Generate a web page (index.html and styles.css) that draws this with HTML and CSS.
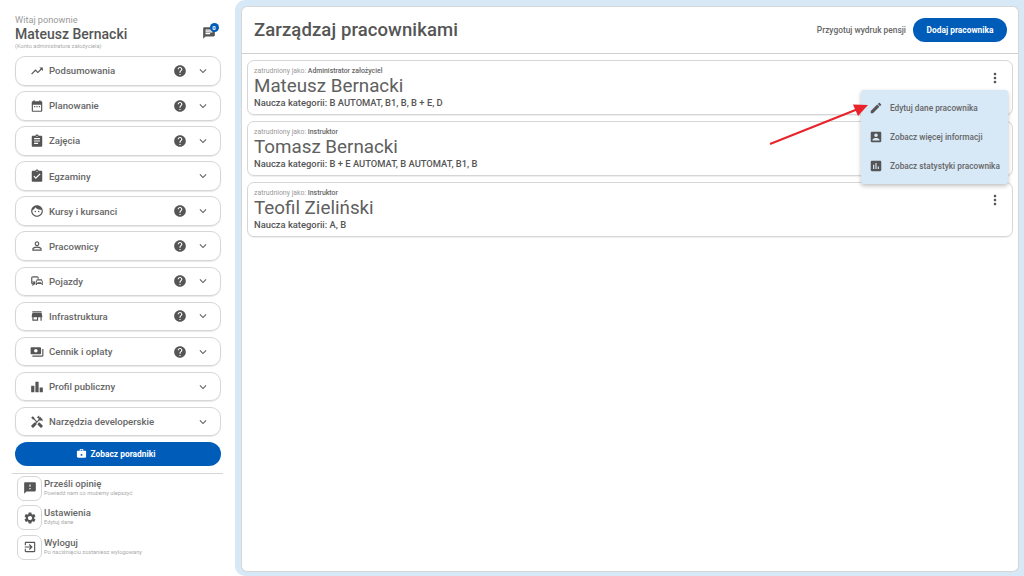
FILE: index.html
```html
<!DOCTYPE html>
<html lang="pl">
<head>
<meta charset="utf-8">
<title>Zarządzaj pracownikami</title>
<link rel="stylesheet" href="styles.css">
</head>
<body>
<div class="app">
  <aside class="sidebar">
    <header class="user">
      <div>
        <div class="hello">Witaj ponownie</div>
        <div class="uname">Mateusz Bernacki</div>
        <div class="role">(Konto administratora założyciela)</div>
      </div>
      <div class="msg">
        <svg class="ic20" viewBox="0 0 24 24"><path d="M20 2H4c-1.1 0-2 .9-2 2v18l4-4h14c1.1 0 2-.9 2-2V4c0-1.100-.9-2-2-2zM6 9h12v2H6zm8 5H6v-2h8zm4-6H6V6h12z"/></svg>
        <span class="badge">0</span>
      </div>
    </header>
    <nav class="menu">
      <div class="item"><svg class="ic" viewBox="0 0 24 24"><path d="M16 6l2.290 2.290-4.880 4.880-4-4L2 16.590 3.410 18l6-6 4 4 6.300-6.290L22 12V6z"/></svg><span class="lbl">Podsumowania</span><svg class="help" viewBox="0 0 24 24"><path d="M12 2C6.480 2 2 6.480 2 12s4.480 10 10 10 10-4.480 10-10S17.520 2 12 2zm1 17h-2v-2h2v2zm2.070-7.750l-.9.920C13.450 12.900 13 13.500 13 15h-2v-.5c0-1.100.45-2.100 1.170-2.830l1.240-1.260c.37-.36.590-.86.590-1.410 0-1.100-.9-2-2-2s-2 .9-2 2H8c0-2.210 1.790-4 4-4s4 1.790 4 4c0 .88-.36 1.680-.93 2.250z"/></svg><svg class="chev" viewBox="0 0 24 24"><path d="M7.410 8.590L12 13.170l4.590-4.580L18 10l-6 6-6-6z"/></svg></div>
      <div class="item"><svg class="ic" viewBox="0 0 24 24"><path d="M19 4h-1V2h-2v2H8V2H6v2H5c-1.100 0-2 .9-2 2v14c0 1.100.9 2 2 2h14c1.100 0 2-.9 2-2V6c0-1.100-.9-2-2-2zm0 16H5V10h14v10zM7 12h2v2H7zm4 0h2v2h-2zm4 0h2v2h-2z"/></svg><span class="lbl">Planowanie</span><svg class="help" viewBox="0 0 24 24"><path d="M12 2C6.480 2 2 6.480 2 12s4.480 10 10 10 10-4.480 10-10S17.520 2 12 2zm1 17h-2v-2h2v2zm2.070-7.750l-.9.920C13.450 12.900 13 13.500 13 15h-2v-.5c0-1.100.45-2.100 1.170-2.830l1.240-1.260c.37-.36.590-.86.590-1.410 0-1.100-.9-2-2-2s-2 .9-2 2H8c0-2.210 1.790-4 4-4s4 1.790 4 4c0 .88-.36 1.680-.93 2.250z"/></svg><svg class="chev" viewBox="0 0 24 24"><path d="M7.410 8.590L12 13.170l4.590-4.580L18 10l-6 6-6-6z"/></svg></div>
      <div class="item"><svg class="ic" viewBox="0 0 24 24"><path d="M19 3h-4.180C14.400 1.840 13.300 1 12 1s-2.400.84-2.820 2H5c-1.100 0-2 .9-2 2v15c0 1.100.9 2 2 2h14c1.100 0 2-.9 2-2V5c0-1.100-.9-2-2-2zm-7 0c.55 0 1 .45 1 1s-.45 1-1 1-1-.45-1-1 .45-1 1-1zm2 14H7v-2h7v2zm3-4H7v-2h10v2zm0-4H7V7h10v2z"/></svg><span class="lbl">Zajęcia</span><svg class="help" viewBox="0 0 24 24"><path d="M12 2C6.480 2 2 6.480 2 12s4.480 10 10 10 10-4.480 10-10S17.520 2 12 2zm1 17h-2v-2h2v2zm2.070-7.750l-.9.920C13.450 12.900 13 13.500 13 15h-2v-.5c0-1.100.45-2.100 1.170-2.830l1.240-1.260c.37-.36.590-.86.590-1.410 0-1.100-.9-2-2-2s-2 .9-2 2H8c0-2.210 1.790-4 4-4s4 1.790 4 4c0 .88-.36 1.680-.93 2.250z"/></svg><svg class="chev" viewBox="0 0 24 24"><path d="M7.410 8.590L12 13.170l4.590-4.580L18 10l-6 6-6-6z"/></svg></div>
      <div class="item"><svg class="ic" viewBox="0 0 24 24"><path d="M19 3h-4.180C14.400 1.840 13.300 1 12 1s-2.400.84-2.820 2H5c-1.100 0-2 .9-2 2v15c0 1.100.9 2 2 2h14c1.100 0 2-.9 2-2V5c0-1.100-.9-2-2-2zm-7 0c.55 0 1 .45 1 1s-.45 1-1 1-1-.45-1-1 .45-1 1-1zm-2 14l-4-4 1.410-1.410L10 14.170l6.590-6.590L18 9l-8 8z"/></svg><span class="lbl">Egzaminy</span><svg class="chev" viewBox="0 0 24 24"><path d="M7.410 8.590L12 13.170l4.590-4.580L18 10l-6 6-6-6z"/></svg></div>
      <div class="item"><svg class="ic" viewBox="0 0 24 24"><circle cx="9" cy="13" r="1.250"/><circle cx="15" cy="13" r="1.250"/><path d="M12 2C6.480 2 2 6.480 2 12s4.480 10 10 10 10-4.480 10-10S17.520 2 12 2zm0 18c-4.410 0-8-3.590-8-8 0-.29.020-.58.050-.86 2.360-1.050 4.230-2.980 5.210-5.370C11.070 8.330 14.050 10 17.420 10c.78 0 1.530-.09 2.250-.26.210.71.330 1.470.33 2.260 0 4.410-3.590 8-8 8z"/></svg><span class="lbl">Kursy i kursanci</span><svg class="help" viewBox="0 0 24 24"><path d="M12 2C6.480 2 2 6.480 2 12s4.480 10 10 10 10-4.480 10-10S17.520 2 12 2zm1 17h-2v-2h2v2zm2.070-7.750l-.9.920C13.450 12.900 13 13.500 13 15h-2v-.5c0-1.100.45-2.100 1.170-2.830l1.240-1.260c.37-.36.590-.86.590-1.410 0-1.100-.9-2-2-2s-2 .9-2 2H8c0-2.210 1.790-4 4-4s4 1.790 4 4c0 .88-.36 1.680-.93 2.250z"/></svg><svg class="chev" viewBox="0 0 24 24"><path d="M7.410 8.590L12 13.170l4.590-4.580L18 10l-6 6-6-6z"/></svg></div>
      <div class="item"><svg class="ic" viewBox="0 0 24 24"><path d="M12 5.900c1.160 0 2.100.94 2.100 2.100s-.94 2.100-2.100 2.100S9.900 9.160 9.900 8s.94-2.100 2.100-2.100m0 9c2.970 0 6.100 1.460 6.100 2.100v1.100H5.900V17c0-.64 3.130-2.100 6.100-2.100M12 4C9.790 4 8 5.790 8 8s1.790 4 4 4 4-1.790 4-4-1.790-4-4-4zm0 9c-2.670 0-8 1.340-8 4v3h16v-3c0-2.660-5.330-4-8-4z"/></svg><span class="lbl">Pracownicy</span><svg class="help" viewBox="0 0 24 24"><path d="M12 2C6.480 2 2 6.480 2 12s4.480 10 10 10 10-4.480 10-10S17.520 2 12 2zm1 17h-2v-2h2v2zm2.070-7.750l-.9.920C13.450 12.900 13 13.500 13 15h-2v-.5c0-1.100.45-2.100 1.170-2.830l1.240-1.260c.37-.36.590-.86.590-1.410 0-1.100-.9-2-2-2s-2 .9-2 2H8c0-2.210 1.790-4 4-4s4 1.790 4 4c0 .88-.36 1.680-.93 2.250z"/></svg><svg class="chev" viewBox="0 0 24 24"><path d="M7.410 8.590L12 13.170l4.590-4.580L18 10l-6 6-6-6z"/></svg></div>
      <div class="item"><svg class="ic" viewBox="0 0 24 24"><path d="M12 4H5C3.340 4 2 5.340 2 7v8c0 1.660 1.340 3 3 3l-1 1v1h1l2-2h2v-5H4V6h9v2h2V7c0-1.660-1.340-3-3-3zM5 14c.55 0 1 .45 1 1s-.45 1-1 1-1-.45-1-1 .45-1 1-1zm15.570-4.340c-.14-.4-.52-.66-.97-.66h-7.190c-.46 0-.83.260-.98.660L10 13.470v5.070c0 .350.280.460.64.460h.72c.35 0 .64-.110.64-.460V17h8v1.530c0 .360.280.470.64.470h.72c.35 0 .64-.110.64-.470l-.01-1.720v-3.340l-1.420-3.810zM12.410 11h7.190l1.030 3h-9.250l1.030-3zM12 16c-.55 0-1-.45-1-1s.45-1 1-1 1 .45 1 1-.45 1-1 1zm8 0c-.55 0-1-.45-1-1s.45-1 1-1 1 .45 1 1-.45 1-1 1z"/></svg><span class="lbl">Pojazdy</span><svg class="help" viewBox="0 0 24 24"><path d="M12 2C6.480 2 2 6.480 2 12s4.480 10 10 10 10-4.480 10-10S17.520 2 12 2zm1 17h-2v-2h2v2zm2.070-7.750l-.9.920C13.450 12.900 13 13.500 13 15h-2v-.5c0-1.100.45-2.100 1.170-2.830l1.240-1.260c.37-.36.590-.86.590-1.410 0-1.100-.9-2-2-2s-2 .9-2 2H8c0-2.210 1.790-4 4-4s4 1.790 4 4c0 .88-.36 1.680-.93 2.250z"/></svg><svg class="chev" viewBox="0 0 24 24"><path d="M7.410 8.590L12 13.170l4.590-4.580L18 10l-6 6-6-6z"/></svg></div>
      <div class="item"><svg class="ic" viewBox="0 0 24 24"><path d="M20 4H4v2h16V4zm1 10v-2l-1-5H4l-1 5v2h1v6h10v-6h4v6h2v-6h1zm-9 4H6v-4h6v4z"/></svg><span class="lbl">Infrastruktura</span><svg class="help" viewBox="0 0 24 24"><path d="M12 2C6.480 2 2 6.480 2 12s4.480 10 10 10 10-4.480 10-10S17.520 2 12 2zm1 17h-2v-2h2v2zm2.070-7.750l-.9.920C13.450 12.900 13 13.500 13 15h-2v-.5c0-1.100.45-2.100 1.170-2.830l1.240-1.260c.37-.36.590-.86.590-1.410 0-1.100-.9-2-2-2s-2 .9-2 2H8c0-2.210 1.790-4 4-4s4 1.790 4 4c0 .88-.36 1.680-.93 2.250z"/></svg><svg class="chev" viewBox="0 0 24 24"><path d="M7.410 8.590L12 13.170l4.590-4.580L18 10l-6 6-6-6z"/></svg></div>
      <div class="item"><svg class="ic" viewBox="0 0 24 24"><path d="M19 14V6c0-1.100-.9-2-2-2H3c-1.100 0-2 .9-2 2v8c0 1.100.9 2 2 2h14c1.100 0 2-.9 2-2zm-9-1c-1.660 0-3-1.340-3-3s1.340-3 3-3 3 1.340 3 3-1.340 3-3 3zm13-6v11c0 1.100-.9 2-2 2H4v-2h17V7h2z"/></svg><span class="lbl">Cennik i opłaty</span><svg class="help" viewBox="0 0 24 24"><path d="M12 2C6.480 2 2 6.480 2 12s4.480 10 10 10 10-4.480 10-10S17.520 2 12 2zm1 17h-2v-2h2v2zm2.070-7.750l-.9.920C13.450 12.900 13 13.500 13 15h-2v-.5c0-1.100.45-2.100 1.170-2.830l1.240-1.260c.37-.36.590-.86.590-1.410 0-1.100-.9-2-2-2s-2 .9-2 2H8c0-2.210 1.790-4 4-4s4 1.790 4 4c0 .88-.36 1.680-.93 2.250z"/></svg><svg class="chev" viewBox="0 0 24 24"><path d="M7.410 8.590L12 13.170l4.590-4.580L18 10l-6 6-6-6z"/></svg></div>
      <div class="item"><svg class="ic" viewBox="0 0 24 24"><path d="M2 10h5.500v11H2zM9.250 3h5.500v18h-5.500zM16.500 13H22v8h-5.500z"/></svg><span class="lbl">Profil publiczny</span><svg class="chev" viewBox="0 0 24 24"><path d="M7.410 8.590L12 13.170l4.590-4.580L18 10l-6 6-6-6z"/></svg></div>
      <div class="item"><svg class="ic" viewBox="0 0 24 24"><path d="M21.670 18.170l-5.300-5.300h-.99l-2.540 2.540v.99l5.300 5.300c.39.39 1.020.39 1.410 0l2.120-2.120c.39-.38.390-1.020 0-1.410z"/><path d="M17.340 10.190l1.410-1.410 2.120 2.120c1.170-1.170 1.170-3.070 0-4.240l-3.540-3.540-1.410 1.410V1.710l-.7-.71-3.540 3.540.71.71h2.830l-1.410 1.410 1.060 1.060-2.890 2.890-4.130-4.130V5.060L4.830 2.040 2 4.870 5.030 7.900h1.410l4.130 4.130-.85.85H7.610l-5.300 5.300c-.39.39-.39 1.020 0 1.410l2.120 2.120c.39.39 1.020.39 1.410 0l5.300-5.300v-2.120l5.150-5.150 1.050 1.050z"/></svg><span class="lbl">Narzędzia developerskie</span><svg class="chev" viewBox="0 0 24 24"><path d="M7.410 8.590L12 13.170l4.590-4.580L18 10l-6 6-6-6z"/></svg></div>
    </nav>
    <button class="guide"><svg class="ic-white" viewBox="0 0 24 24"><path d="M20 6h-4V4c0-1.100-.9-2-2-2h-4c-1.100 0-2 .9-2 2v2H4c-1.100 0-2 .9-2 2v11c0 1.100.9 2 2 2h16c1.100 0 2-.9 2-2V8c0-1.100-.9-2-2-2zM10 4h4v2h-4V4zm2 13c-1.100 0-2-.9-2-2s.9-2 2-2 2 .9 2 2-.9 2-2 2z"/></svg>Zobacz poradniki</button>
    <div class="divider"></div>
    <div class="links">
      <div class="link"><span class="tile"><svg class="ic" viewBox="0 0 24 24"><path d="M20 2H4c-1.100 0-2 .9-2 2v18l4-4h14c1.100 0 2-.9 2-2V4c0-1.100-.9-2-2-2zm-7 12h-2v-2h2v2zm0-4h-2V6h2v4z"/></svg></span><div><div class="ltitle">Prześli opinię</div><div class="lsub">Powiedź nam co możemy ulepszyć</div></div></div>
      <div class="link"><span class="tile"><svg class="ic" viewBox="0 0 24 24"><path d="M19.140 12.940c.04-.3.060-.61.060-.94 0-.32-.02-.64-.07-.94l2.030-1.580c.18-.14.230-.41.120-.61l-1.920-3.320c-.12-.22-.37-.29-.59-.22l-2.390.96c-.5-.38-1.030-.7-1.620-.94l-.36-2.540c-.04-.24-.24-.41-.48-.41h-3.840c-.24 0-.43.170-.47.410l-.36 2.540c-.59.240-1.130.570-1.620.94l-2.390-.96c-.22-.08-.47 0-.59.220L2.740 8.870c-.12.210-.08.470.12.610l2.030 1.580c-.05.3-.09.630-.09.940s.02.640.07.940l-2.030 1.580c-.18.140-.23.410-.12.610l1.920 3.320c.12.220.37.290.59.220l2.390-.96c.5.380 1.030.7 1.620.94l.36 2.540c.05.240.24.410.48.410h3.840c.24 0 .44-.17.470-.41l.36-2.540c.59-.24 1.130-.56 1.620-.94l2.390.96c.22.080.47 0 .59-.22l1.920-3.320c.12-.22.070-.47-.12-.61l-2.010-1.580zM12 15.600c-1.980 0-3.600-1.620-3.600-3.600s1.620-3.600 3.600-3.600 3.600 1.620 3.600 3.600-1.620 3.600-3.600 3.600z"/></svg></span><div><div class="ltitle">Ustawienia</div><div class="lsub">Edytuj dane</div></div></div>
      <div class="link"><span class="tile"><svg class="ic" viewBox="0 0 24 24"><path d="M10.090 15.590L11.500 17l5-5-5-5-1.410 1.410L12.670 11H3v2h9.670l-2.580 2.590zM19 3H5c-1.110 0-2 .9-2 2v4h2V5h14v14H5v-4H3v4c0 1.100.89 2 2 2h14c1.100 0 2-.9 2-2V5c0-1.100-.9-2-2-2z"/></svg></span><div><div class="ltitle">Wyloguj</div><div class="lsub">Po naciśnięciu zostaniesz wylogowany</div></div></div>
    </div>
  </aside>
  <main class="panel">
    <header class="head">
      <h1>Zarządzaj pracownikami</h1>
      <div class="actions"><span class="print">Przygotuj wydruk pensji</span><button class="add">Dodaj pracownika</button></div>
    </header>
    <section class="list">
      <article class="card">
        <div class="job">zatrudniony jako: <b>Administrator założyciel</b></div>
        <div class="name">Mateusz Bernacki</div>
        <div class="cats">Naucza kategorii: B AUTOMAT, B1, B, B + E, D</div>
        <svg class="more" viewBox="0 0 24 24"><path d="M12 8c1.100 0 2-.9 2-2s-.9-2-2-2-2 .9-2 2 .9 2 2 2zm0 2c-1.100 0-2 .9-2 2s.9 2 2 2 2-.9 2-2-.9-2-2-2zm0 6c-1.100 0-2 .9-2 2s.9 2 2 2 2-.9 2-2-.9-2-2-2z"/></svg>
      </article>
      <article class="card">
        <div class="job">zatrudniony jako: <b>Instruktor</b></div>
        <div class="name">Tomasz Bernacki</div>
        <div class="cats">Naucza kategorii: B + E AUTOMAT, B AUTOMAT, B1, B</div>
      </article>
      <article class="card">
        <div class="job">zatrudniony jako: <b>Instruktor</b></div>
        <div class="name">Teofil Zieliński</div>
        <div class="cats">Naucza kategorii: A, B</div>
        <svg class="more" viewBox="0 0 24 24"><path d="M12 8c1.100 0 2-.9 2-2s-.9-2-2-2-2 .9-2 2 .9 2 2 2zm0 2c-1.100 0-2 .9-2 2s.9 2 2 2 2-.9 2-2-.9-2-2-2zm0 6c-1.100 0-2 .9-2 2s.9 2 2 2 2-.9 2-2-.9-2-2-2z"/></svg>
      </article>
    </section>
  </main>
</div>
<div class="popup">
  <div class="pitem"><svg class="ic" viewBox="0 0 24 24"><path d="M3 17.250V21h3.750L17.810 9.940l-3.750-3.750L3 17.250zM20.710 7.040c.39-.39.390-1.020 0-1.410l-2.340-2.340c-.39-.39-1.020-.39-1.410 0l-1.830 1.830 3.750 3.750 1.830-1.830z"/></svg>Edytuj dane pracownika</div>
  <div class="pitem"><svg class="ic" viewBox="0 0 24 24"><path d="M19 3H5c-1.110 0-2 .9-2 2v14c0 1.100.89 2 2 2h14c1.100 0 2-.9 2-2V5c0-1.100-.9-2-2-2zm-7 3c1.660 0 3 1.340 3 3s-1.340 3-3 3-3-1.340-3-3 1.340-3 3-3zm6 12H6v-1c0-2 4-3.100 6-3.100s6 1.100 6 3.100v1z"/></svg>Zobacz więcej informacji</div>
  <div class="pitem"><svg class="ic" viewBox="0 0 24 24"><path d="M19 3H5c-1.100 0-2 .9-2 2v14c0 1.100.9 2 2 2h14c1.100 0 2-.9 2-2V5c0-1.100-.9-2-2-2zM9 17H7v-7h2v7zm4 0h-2V7h2v10zm4 0h-2v-4h2v4z"/></svg>Zobacz statystyki pracownika</div>
</div>
<svg class="arrow" viewBox="0 0 1024 576"><path d="M770 144L858 109" stroke="#e8232a" stroke-width="2"/><path d="M868 105L853 104.500 858 116z" fill="#e8232a"/></svg>
</body>
</html>
```
FILE: styles.css
```css
* { box-sizing: border-box; }
html, body { margin: 0; height: 100%; }
body { font-family: Roboto, "Liberation Sans", sans-serif; color: #555; background: #fff; overflow: hidden; }
.app { display: flex; width: 1024px; height: 576px; }
.sidebar { width: 235px; flex: none; padding: 14px 15px 0; display: flex; flex-direction: column; }
.user { display: flex; justify-content: space-between; align-items: flex-start; height: 42px; }
.hello { font-size: 9.2px; line-height: 12px; color: #9a9a9a; }
.uname { font-size: 14px; line-height: 17px; font-weight: 500; color: #555; }
.role { font-size: 5.7px; line-height: 7px; color: #aaa; }
.msg { position: relative; width: 13px; height: 13px; margin-right: 4px; margin-top: 12px; }
.ic20 { width: 14px; height: 14px; fill: #555; display: block; margin-left: -1px; }
.badge { position: absolute; left: 6.5px; top: -3px; width: 9px; height: 9px; border-radius: 50%; background: #005cb9; color: #fff; font-size: 6px; line-height: 9px; text-align: center; font-weight: 700; }
.menu { display: flex; flex-direction: column; gap: 5.6px; }
.item { height: 29.5px; width: 206px; border: 1px solid #d6d6d6; border-radius: 10px; display: flex; align-items: center; padding-left: 14px; box-shadow: 0 1px 1px #e8e8e8; }
.ic { width: 14px; height: 14px; fill: #555; flex: none; }
.lbl { font-size: 9.6px; font-weight: 500; color: #666; margin-left: 5px; flex: 1; }
.help { width: 14px; height: 14px; fill: #555; flex: none; }
.chev { width: 14px; height: 14px; fill: #666; flex: none; margin-left: 9px; margin-right: 10px; }
.guide { margin-top: 5.5px; height: 24px; width: 206px; border: 0; border-radius: 12px; background: #005cb9; color: #fff; font: 700 8.4px Roboto, sans-serif; display: flex; align-items: center; justify-content: center; gap: 4px; padding: 0 5px 0 0; flex: none; }
.ic-white { width: 11px; height: 11px; fill: #fff; }
.divider { height: 1px; background: #d6d6d6; width: 211px; margin: 7px 0 0 -3px; flex: none; }
.links { display: flex; flex-direction: column; gap: 4.3px; margin-top: 2px; }
.link { display: flex; gap: 2px; align-items: flex-start; margin-left: 2px; height: 25px; }
.tile { width: 25px; height: 25px; border: 1px solid #d6d6d6; border-radius: 7px; display: flex; align-items: center; justify-content: center; flex: none; }
.ltitle { font-size: 9.5px; font-weight: 500; line-height: 12px; color: #666; margin-top: 2px; }
.lsub { font-size: 5.7px; line-height: 7px; color: #aaa; }
.panel { width: 789px; height: 576px; background: #d7e8f7; border-radius: 10px 0 0 10px; padding: 6px 5px 4px 6px; display: flex; flex-direction: column; }
.head { background: #fff; border: 1px solid #d6d6d6; border-bottom: 1px solid #cfcfcf; border-radius: 6px 6px 0 0; height: 48px; display: flex; align-items: center; justify-content: space-between; padding: 0 11px 0 12px; flex: none; }
h1 { margin: 0; font-size: 18.5px; font-weight: 500; color: #555; letter-spacing: .1px; }
.actions { display: flex; align-items: center; gap: 7px; }
.print { font-size: 8.4px; font-weight: 500; color: #666; }
.add { height: 24px; width: 94px; border: 0; border-radius: 12px; background: #005cb9; color: #fff; font: 700 8.4px Roboto, sans-serif; padding: 0; }
.list { flex: 1; background: #fff; border: 1px solid #d6d6d6; border-top: 0; border-radius: 0 0 6px 6px; padding: 6px 5px; display: flex; flex-direction: column; gap: 6px; }
.card { position: relative; height: 55px; border: 1px solid #d6d6d6; border-radius: 7px; padding: 6px 6px 0; box-shadow: 0 1px 1px #eee; }
.job { font-size: 6.9px; line-height: 8px; color: #999; }
.job b { font-weight: 500; color: #666; }
.name { font-size: 18.8px; line-height: 20px; color: #606060; margin-top: 1px; }
.cats { font-size: 9.4px; line-height: 11px; font-weight: 500; color: #555; margin-top: 1px; }
.more { position: absolute; right: 9px; top: 9px; width: 16px; height: 16px; fill: #555; }
.popup { position: absolute; left: 861px; top: 90px; width: 147px; height: 94px; background: #d7e8f7; border-radius: 3px; box-shadow: 0 2px 4px rgba(0,0,0,.25); display: flex; flex-direction: column; padding: 4px 0; }
.pitem { flex: 1; display: flex; align-items: center; gap: 7px; padding-left: 8px; font-size: 8.3px; font-weight: 500; color: #666; white-space: nowrap; }
.arrow { position: absolute; left: 0; top: 0; width: 1024px; height: 576px; pointer-events: none; }
```
